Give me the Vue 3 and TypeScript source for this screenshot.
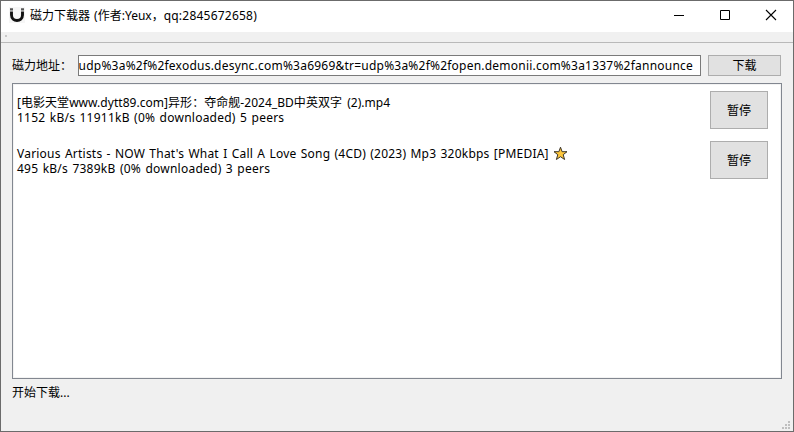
<script setup lang="ts">
interface Task { name: string; status: string; starred: boolean }

const address = 'udp%3a%2f%2fexodus.desync.com%3a6969&tr=udp%3a%2f%2fopen.demonii.com%3a1337%2fannounce'
const tasks: Task[] = [
  { name: '[电影天堂www.dytt89.com]异形：夺命舰-2024_BD中英双字 (2).mp4', status: '1152 kB/s 11911kB (0% downloaded) 5 peers', starred: false },
  { name: "Various Artists - NOW That's What I Call A Love Song (4CD) (2023) Mp3 320kbps [PMEDIA]", status: '495 kB/s 7389kB (0% downloaded) 3 peers', starred: true },
]
</script>

<template>
  <div class="window" lang="zh-CN">
    <header class="titlebar">
      <svg class="logo" width="16" height="16" viewBox="0 0 16 16">
        <rect width="16" height="16" fill="#f6f6f6" />
        <path d="M2.5 4.5V8C2.5 15.3 13.5 15.3 13.5 8V4.5" fill="none" stroke="#111" stroke-width="2.9" />
        <path d="M1 1.3h3v2.2h-3zM12 1.3h3v2.2h-3z" fill="#555" />
      </svg>
      <span class="title">磁力下载器 (作者:Yeux，<span class="latin">qq:2845672658)</span></span>
      <div class="controls">
        <svg width="46" height="30" viewBox="0 0 46 30"><path d="M18 15.5h10" stroke="#000" /></svg>
        <svg width="46" height="30" viewBox="0 0 46 30"><path d="M18.5 10.5h9v9h-9z" fill="none" stroke="#000" /></svg>
        <svg width="46" height="30" viewBox="0 0 46 30"><path d="M18 10l10 10M28 10l-10 10" stroke="#000" stroke-width="1.1" /></svg>
      </div>
    </header>
    <div class="toolbar"><i></i></div>
    <main>
      <div class="form">
        <label>磁力地址：</label>
        <div class="field"><span class="latin">{{ address }}</span></div>
        <button class="download">下载</button>
      </div>
      <div class="list">
        <div v-for="task in tasks" :key="task.name" class="task">
          <div class="info">
            <div class="line"><span :class="task.starred ? 'latin' : 'mixed'">{{ task.name }}</span><svg v-if="task.starred" class="star" width="15" height="15" viewBox="0 0 15 15"><path d="M7.5 1.2l1.6 4.5h4.9l-3.8 3 1.4 4.8-4.1-2.8-4.1 2.8 1.4-4.8-3.8-3h4.9z" fill="#ffc83d" stroke="#3b3529" /></svg></div>
            <div class="line"><span class="status">{{ task.status }}</span></div>
          </div>
          <button class="pause">暂停</button>
        </div>
      </div>
      <div class="message">开始下载...</div>
    </main>
    <svg class="grip" width="9" height="9" viewBox="0 0 9 9"><path d="M6 0h2v2h-2zM3 3h2v2h-2zM6 3h2v2h-2zM0 6h2v2h-2zM3 6h2v2h-2zM6 6h2v2h-2z" fill="#bfbfbf" /></svg>
  </div>
</template>

<style>
body { margin: 0; overflow: hidden; }
</style>
<style scoped>
.window { position: relative; box-sizing: border-box; width: 794px; height: 432px; border: 1px solid #6b6b6b; background: #f0f0f0; color: #000; font: 12px/15px "Noto Sans", "Noto Sans CJK SC", sans-serif; overflow: hidden; }
.titlebar { display: flex; height: 31px; background: #fff; align-items: flex-start; padding-left: 8px; }
.logo { margin: 6px 5px 0 0; }
.title { margin-top: 7px; white-space: pre; word-spacing: 1px; }
.latin { letter-spacing: 0.22px; word-spacing: 0.9px; }
.status { letter-spacing: 0.24px; word-spacing: 1px; }
.mixed { letter-spacing: 0.04px; word-spacing: 2px; }
.controls { display: flex; margin-left: auto; margin-right: -1px; }
.controls svg { margin-top: -1px; }
.toolbar { height: 10px; border-bottom: 1px solid #b9b9b9; }
.toolbar i { display: block; width: 2px; height: 2px; margin-left: 4px; background: #c8c8c8; transform: translateY(3px); }
main { padding: 12px 11px 0; }
.form { display: flex; height: 21px; }
label { width: 66px; line-height: 21px; white-space: pre; }
.field { box-sizing: border-box; width: 623px; border: 1px solid #7a7a7a; background: #fff; overflow: hidden; display: flex; justify-content: flex-end; padding-right: 7px; line-height: 19px; white-space: pre; }
button { box-sizing: border-box; border: 1px solid #adadad; background: #e1e1e1; padding: 0; font: inherit; color: #000; }
.download { width: 73px; margin-left: 7px; }
.list { box-sizing: border-box; height: 296px; margin-top: 7px; border: 1px solid #828790; box-shadow: inset 0 0 0 1px #f3f3f3; background: #fff; padding: 7px 13px 0 4px; }
.task { display: flex; justify-content: space-between; height: 50px; }
.info { padding-top: 4px; }
.task + .task .info { padding-top: 5px; }
.line { display: flex; height: 15px; white-space: pre; }
.star { margin-left: 4px; }
.pause { width: 58px; height: 38px; }
.message { margin-top: 6px; }
.grip { position: absolute; right: 2px; bottom: 1px; }
</style>
